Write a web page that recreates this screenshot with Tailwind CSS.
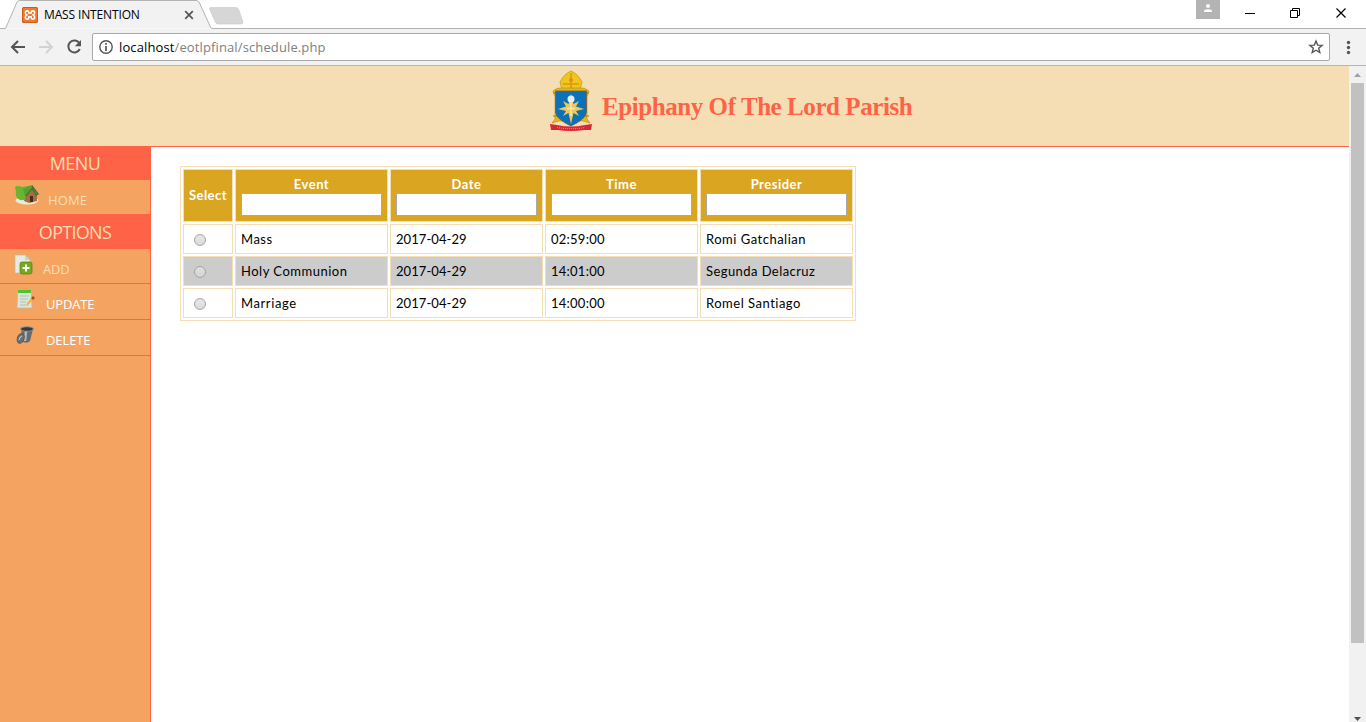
<!DOCTYPE html>
<html lang="en">
<head>
<meta charset="utf-8">
<title>MASS INTENTION</title>
<script src="https://cdn.jsdelivr.net/npm/@tailwindcss/browser@4"></script>
</head>
<body class="w-[1366px] h-[722px] overflow-hidden bg-white flex flex-col font-['Open_Sans',sans-serif] text-black">

<!-- Tab strip -->
<div class="relative h-[29px] shrink-0 flex justify-between bg-white">
  <svg class="absolute left-0 top-0" width="1366" height="29" viewBox="0 0 1366 29">
    <path d="M0 28.5H5.500L17 2Q18 .5 20 .5H196Q198 .5 199 2L210.500 27Q211 28.500 213 28.500H1366" fill="#f2f2f2" stroke="#b3b3b3"/>
    <path d="M210.500 7.500H236Q237.500 7.500 238.500 9L243 22Q243 24 241 24H218Q216.500 24 215.500 22.500L209.500 9Q209 7.500 210.500 7.500Z" fill="#d6d6d6" stroke="#cacaca" stroke-width=".6"/>
  </svg>
  <div class="relative flex items-center h-[29px] pl-[22px]">
    <svg width="16" height="16" viewBox="0 0 16 16"><rect width="16" height="16" rx="1.500" fill="#ee7a30"/><rect x=".5" y=".5" width="15" height="15" rx="1.500" fill="none" stroke="#cf5a18"/><path d="M5.200 3.800Q3.200 4 3.400 6Q3.500 7.300 4.800 8Q3.300 8.700 3.300 10.300Q3.400 12.200 5.200 12.200Q6.800 12.200 6.800 10.300V9.800H9.200V10.300Q9.200 12.200 10.800 12.200Q12.600 12.200 12.700 10.300Q12.700 8.700 11.200 8Q12.500 7.300 12.600 6Q12.800 4 10.800 3.800Q9.200 3.800 9.200 6H6.800Q6.800 3.800 5.200 3.800Z" fill="none" stroke="#fff" stroke-width="1.500"/></svg>
    <span class="ml-[6px] w-[136px] text-[12px] tracking-[-0.14px] whitespace-nowrap">MASS INTENTION</span>
    <svg class="ml-[4px]" width="10" height="10" viewBox="0 0 10 10"><path d="M1.200 1.200L8.800 8.800M8.800 1.200L1.200 8.800" stroke="#555" stroke-width="1.700"/></svg>
  </div>
  <div class="relative flex">
    <svg width="24" height="19" viewBox="0 0 24 19"><rect width="24" height="19" fill="#b3b3b3"/><circle cx="12" cy="6" r="2.100" fill="#fff"/><path d="M8 12V11Q8 9.200 12 9.200T16 11V12Z" fill="#fff"/></svg>
    <svg width="146" height="28" viewBox="1220 0 146 28" fill="none" stroke="#000"><path d="M1245 13.500H1255"/><path d="M1290.500 10.500H1297.500V17.500H1290.500ZM1292.500 10.500V8.500H1299.500V15.500H1297.500"/><path d="M1336.500 8.500L1345.500 17.500M1345.500 8.500L1336.500 17.500" stroke-width="1.200"/></svg>
  </div>
</div>

<!-- Toolbar -->
<div class="h-[37px] shrink-0 bg-[#f2f2f2] border-b border-[#b6b6b6] flex items-start pt-[4px]">
  <svg class="shrink-0" width="92" height="28" viewBox="0 33 92 28" fill="none" stroke-width="2"><path d="M25 47H12.500M18 41L12 47L18 53" stroke="#555"/><path d="M39 47H51.500M46 41L52 47L46 53" stroke="#d2d2d2"/><path d="M79.500 43.300A6 6 0 1 0 79.800 49" stroke="#555"/><path d="M81 40V46.200H74.800Z" fill="#555"/></svg>
  <div class="w-[1238px] h-[28px] shrink-0 bg-white border border-[#a9a9a9] rounded-[2px] flex items-center pl-[6px] pr-[5px]">
    <svg width="14" height="14" viewBox="0 0 14 14"><circle cx="7" cy="7" r="6.200" fill="none" stroke="#555" stroke-width="1.400"/><path d="M7 3V4.800M7 6V11" stroke="#555" stroke-width="1.700"/></svg>
    <span class="ml-[6px] mt-[1px] flex-1 text-[13px] tracking-[0.12px] text-[#808080]"><span class="text-black">localhost</span>/eotlpfinal/schedule.php</span>
    <svg width="16" height="16" viewBox="0 0 16 16"><path d="M8 2L9.700 6.100L14.100 6.400L10.700 9.200L11.800 13.500L8 11.200L4.200 13.500L5.300 9.200L1.900 6.400L6.300 6.100Z" fill="none" stroke="#555" stroke-width="1.400"/></svg>
  </div>
  <svg width="36" height="28" viewBox="1330 33 36 28" fill="#555"><circle cx="1348.500" cy="42.500" r="1.700"/><circle cx="1348.500" cy="47.500" r="1.700"/><circle cx="1348.500" cy="52.500" r="1.700"/></svg>
</div>

<div class="flex flex-1 min-h-0">
  <div class="w-[1349px] flex flex-col">
    <!-- Banner -->
    <header class="h-[81px] shrink-0 bg-[#f5deb3] border-b border-[#ff6347] flex items-start pl-[549px] pt-[4px]">
      <svg class="shrink-0" width="44" height="62" viewBox="0 0 44 62">
        <path d="M13 20L11 12Q15 4 22 1Q29 4 33 12L31 20Z" fill="#f1c51b" stroke="#c79a16" stroke-width=".8"/>
        <path d="M22 3V19M14 14H30" stroke="#d39a12" stroke-width="1.500"/><circle cx="22" cy="10" r="2" fill="#e88b1c"/>
        <path d="M4 21Q8 17 14 18H30Q36 17 40 21L38 27V49L41 53L34 51H10L3 53L6 49V27Z" fill="#e4b520" stroke="#b98c1b" stroke-width=".6"/>
        <path d="M4 23H9M35 23H40M4 46H9M35 46H40" stroke="#a37a1c"/>
        <path d="M6.500 21H37.500V42Q37 49 22 56Q7 49 6.500 42Z" fill="#0b72b9" stroke="#765f28" stroke-width=".8"/>
        <path d="M22 24L24.500 34L30 31L27 36.500L35 39L27 41L30 46L24.500 43L22 54L19.500 43L14 46L17 41L9 39L17 36.500L14 31L19.500 34Z" fill="#f0c85a"/>
        <circle cx="22" cy="29" r="3.500" fill="#e7eef2"/><path d="M22 33V46M18 38.500H26" stroke="#f9e9ae" stroke-width="1.500"/>
        <path d="M1 54L8 55Q22 58 36 55L43 54L42 60H35Q22 62 9 60H2Z" fill="#d82734"/>
        <path d="M8 57.500Q22 60 36 57.500" fill="none" stroke="#efa0a0" stroke-dasharray="1 1"/>
      </svg>
      <h1 class="ml-[9px] mt-[22px] font-['Liberation_Serif',serif] font-bold text-[25px] leading-[30px] tracking-[-0.43px] whitespace-nowrap text-[#ff6347]">Epiphany Of The Lord Parish</h1>
    </header>

    <div class="flex flex-1 min-h-0">
      <!-- Side menu -->
      <nav class="w-[151px] shrink-0 bg-[#f4a460] border-r border-[#ff6347] text-[#f5deb3]">
        <h2 class="h-[33px] bg-[#ff6347] text-center text-[18px] leading-[33px] font-normal tracking-[-0.6px]">MENU</h2>
        <div class="h-[34px] flex pl-[14px]">
          <svg class="mt-[4px] shrink-0" width="26" height="22" viewBox="0 0 26 22"><ellipse cx="13" cy="16.500" rx="11.500" ry="4" fill="#e9eadc"/><path d="M11 11L18 4L23 10V17L15 19L10 17Z" fill="#a56d45"/><path d="M16 12H19V18H16Z" fill="#4e2b17"/><path d="M1 3Q4 1 8 3L19 1L12 10L11 15Q8 18 3 14Q1 11 2 8Z" fill="#69b52f"/><path d="M9 5L19 1L11 12Z" fill="#57a02c"/><path d="M18 2L24 10L22 11L18 4L12 12" fill="none" stroke="#3f7a2a" stroke-width="1.500"/></svg>
          <span class="ml-[8px] mt-[11px] text-[13px] leading-[18px] tracking-[0.1px]">HOME</span>
        </div>
        <h2 class="h-[35px] bg-[#ff6347] text-center text-[18px] leading-[36px] font-normal tracking-[-0.7px]">OPTIONS</h2>
        <div class="h-[35px] border-b border-[#ff6347] flex pl-[14px]">
          <svg class="mt-[4px] shrink-0" width="20" height="22" viewBox="0 0 20 22"><path d="M1 2H11L16 7V20H1Z" fill="#e7e9e5" stroke="#bdbfae" stroke-width=".7"/><path d="M11 2V7H16" fill="#cfd3cc"/><rect x="6" y="9" width="12" height="12" rx="2" fill="#75aa1d" stroke="#4e8216" stroke-width=".7"/><path d="M12 11.500V18.500M8.500 15H15.500" stroke="#fff" stroke-width="2"/></svg>
          <span class="ml-[9px] mt-[11px] text-[13px] leading-[18px] tracking-[-0.2px]">ADD</span>
        </div>
        <div class="h-[36px] border-b border-[#ff6347] flex pl-[16px] text-white">
          <svg class="mt-[4px] shrink-0" width="20" height="22" viewBox="0 0 20 22"><path d="M2 2H15L16 20H1Z" fill="#dce5dc" stroke="#b5bea9" stroke-width=".7"/><path d="M2 2H15V5H2Z" fill="#4fc52b"/><path d="M4 8H13M4 11H12M4 14H10M4 17H13" stroke="#b3beb2"/><path d="M11 15L16 9L18 11L13 16L10.500 17Z" fill="#f5b52d"/><path d="M15 10L17 8L19 10L17 12Z" fill="#ba3e35"/></svg>
          <span class="ml-[10px] mt-[11px] text-[13px] leading-[18px] tracking-[-0.15px]">UPDATE</span>
        </div>
        <div class="h-[36px] border-b border-[#ff6347] flex pl-[16px] text-white">
          <svg class="mt-[5px] shrink-0" width="20" height="22" viewBox="0 0 20 22"><path d="M5 4L17 4L14 16Q11 19 7 17Z" fill="#686b6c"/><path d="M10 6L9 16" stroke="#b5b8b8" stroke-width="2.500"/><ellipse cx="11" cy="4" rx="6.500" ry="2.300" fill="#343b3e" stroke="#92979a"/><ellipse cx="4.500" cy="13.500" rx="3.300" ry="5" transform="rotate(22 5 14)" fill="#697174" stroke="#555b5d"/><path d="M3 15Q4 11 6 11" fill="none" stroke="#d2d2d2"/></svg>
          <span class="ml-[10px] mt-[11px] text-[13px] leading-[18px] tracking-[-0.1px]">DELETE</span>
        </div>
      </nav>

      <!-- Schedule -->
      <main class="flex-1 pl-[29px] pt-[19px]">
        <div class="w-[676px] h-[155px] border border-[#f5deb3] p-[2px] grid grid-cols-[50px_153px_153px_153px_153px] grid-rows-[53px_30px_30px_30px] gap-[2px] font-[Lato,sans-serif] text-[13px] leading-[18px] tracking-[0.5px] [&>*]:border [&>*]:border-[#f5deb3]">
          <div class="bg-[#daa520] text-white font-bold flex items-center justify-center pb-[2px] tracking-[0.45px]">Select</div>
          <div class="bg-[#daa520] text-white font-bold flex flex-col items-center pt-[5px]"><span>Event</span><span class="w-[141px] h-[23px] bg-white border border-[#a9a9a9]"></span></div>
          <div class="bg-[#daa520] text-white font-bold flex flex-col items-center pt-[5px]"><span>Date</span><span class="w-[141px] h-[23px] bg-white border border-[#a9a9a9]"></span></div>
          <div class="bg-[#daa520] text-white font-bold flex flex-col items-center pt-[5px]"><span>Time</span><span class="w-[141px] h-[23px] bg-white border border-[#a9a9a9]"></span></div>
          <div class="bg-[#daa520] text-white font-bold flex flex-col items-center pt-[5px]"><span>Presider</span><span class="w-[141px] h-[23px] bg-white border border-[#a9a9a9]"></span></div>

          <div class="pl-[10px] pt-[9px]"><span class="block size-[12px] rounded-full border border-[#a4a4a4] bg-linear-to-b from-[#e8e8e8] to-[#dadada]"></span></div>
          <div class="pl-[5px] pt-[5px]">Mass</div><div class="pl-[5px] pt-[5px] tracking-[0.07px]">2017-04-29</div><div class="pl-[5px] pt-[5px] tracking-[0.25px]">02:59:00</div><div class="pl-[5px] pt-[5px]">Romi Gatchalian</div>

          <div class="bg-[#ccc] pl-[10px] pt-[9px]"><span class="block size-[12px] rounded-full border border-[#a4a4a4] bg-linear-to-b from-[#e0e0e0] to-[#d4d4d4]"></span></div>
          <div class="bg-[#ccc] pl-[5px] pt-[5px]">Holy Communion</div><div class="bg-[#ccc] pl-[5px] pt-[5px] tracking-[0.07px]">2017-04-29</div><div class="bg-[#ccc] pl-[5px] pt-[5px] tracking-[0.25px]">14:01:00</div><div class="bg-[#ccc] pl-[5px] pt-[5px] tracking-[0.43px]">Segunda Delacruz</div>

          <div class="pl-[10px] pt-[9px]"><span class="block size-[12px] rounded-full border border-[#a4a4a4] bg-linear-to-b from-[#e8e8e8] to-[#dadada]"></span></div>
          <div class="pl-[5px] pt-[5px] tracking-[0.6px]">Marriage</div><div class="pl-[5px] pt-[5px] tracking-[0.07px]">2017-04-29</div><div class="pl-[5px] pt-[5px] tracking-[0.25px]">14:00:00</div><div class="pl-[5px] pt-[5px]">Romel Santiago</div>
        </div>
      </main>
    </div>
  </div>

  <!-- Scrollbar -->
  <div class="w-[17px] bg-[#f1f1f1] flex flex-col items-center">
    <svg class="shrink-0" width="17" height="17" viewBox="0 0 17 17"><path d="M5 11L8.500 7L12 11Z" fill="#a3a3a3"/></svg>
    <div class="w-[13px] h-[560px] bg-[#c1c1c1]"></div>
    <svg class="shrink-0 mt-auto" width="17" height="12" viewBox="0 0 17 12"><path d="M5 7L8.500 11L12 7Z" fill="#505050"/></svg>
  </div>
</div>
</body>
</html>
